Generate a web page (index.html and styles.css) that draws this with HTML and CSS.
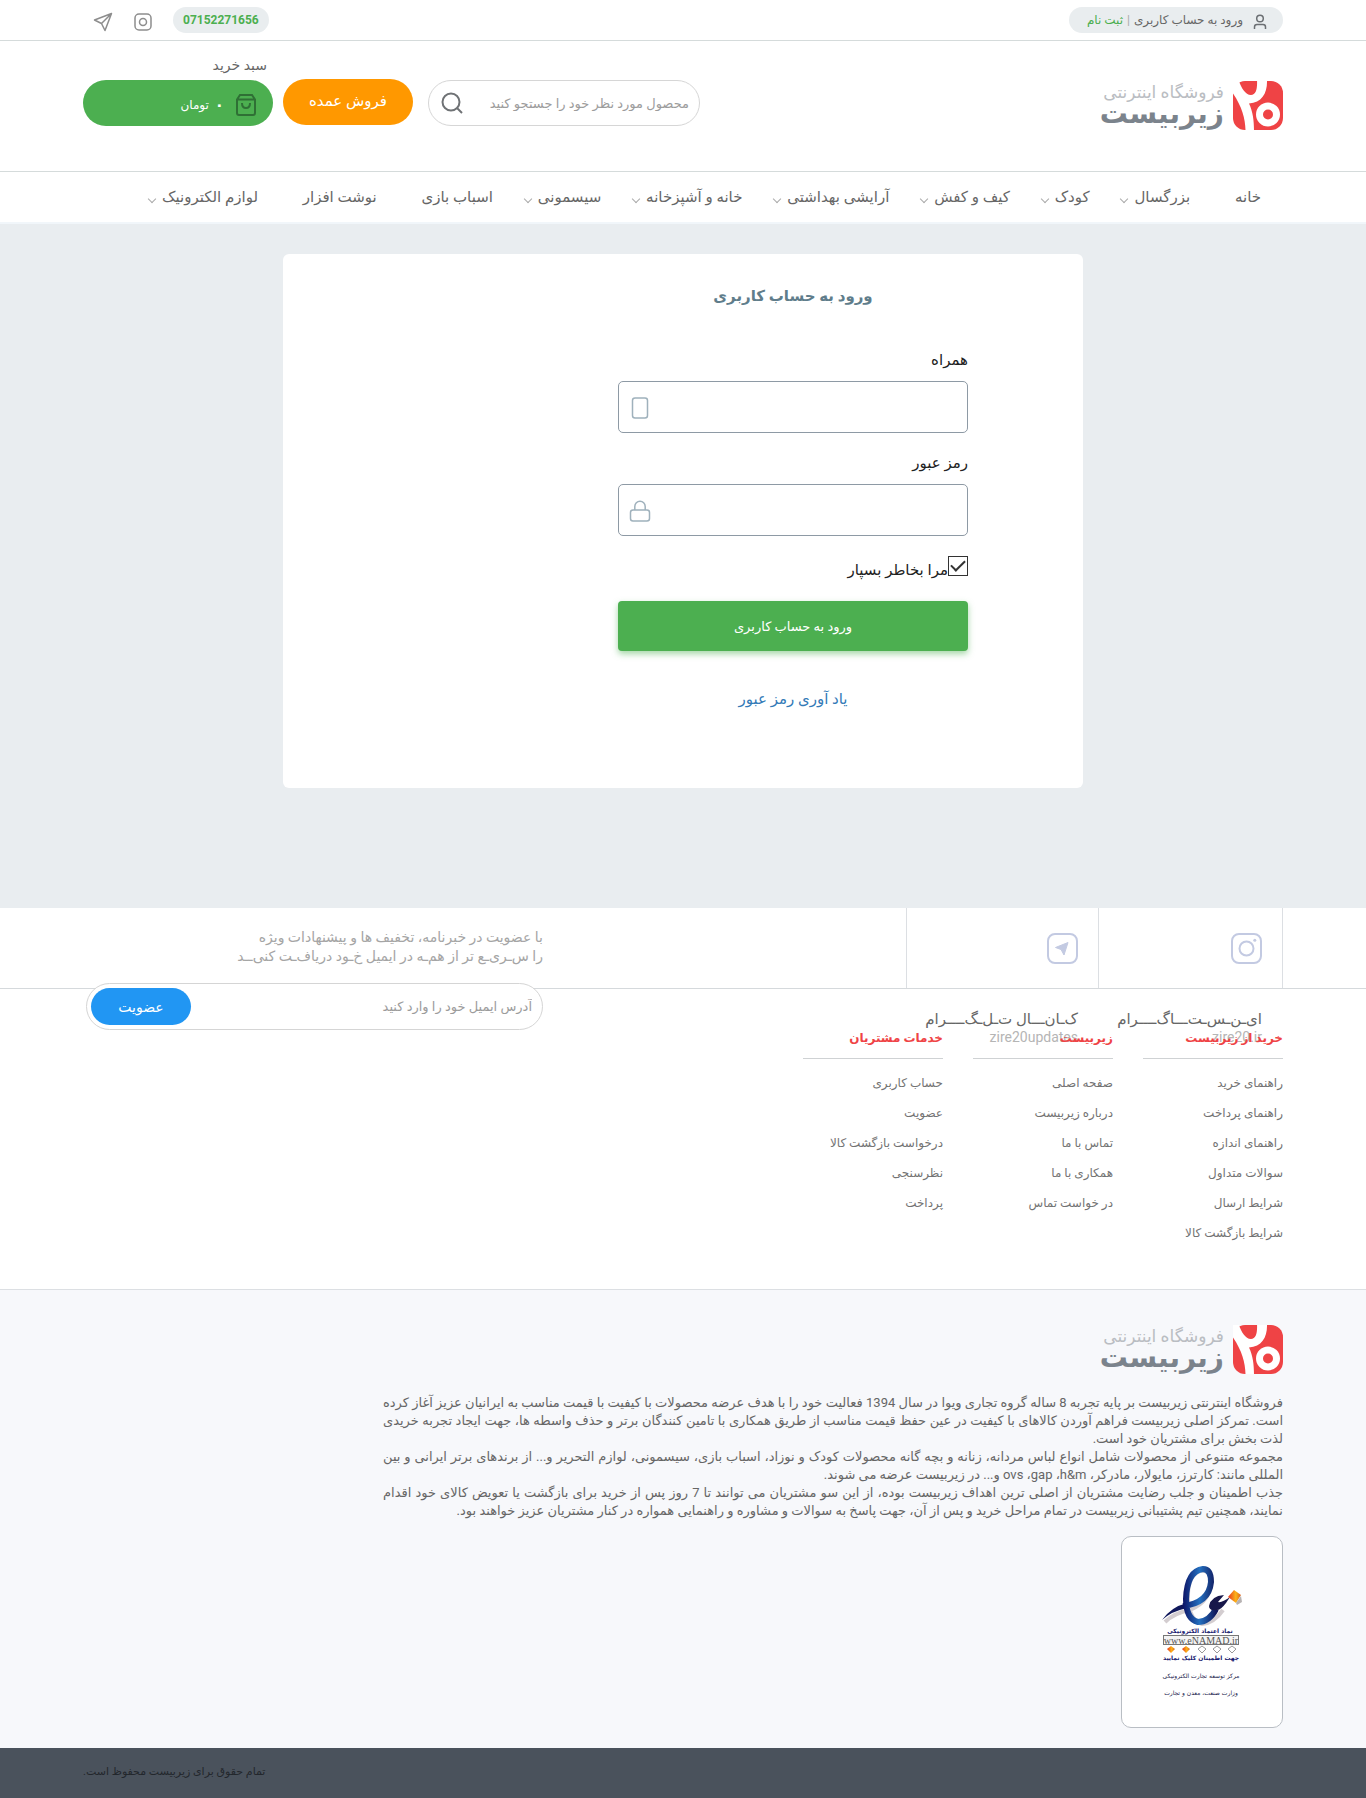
FILE: index.html
```html
<!DOCTYPE html>
<html lang="fa" dir="rtl">
<head>
<meta charset="utf-8">
<meta name="viewport" content="width=device-width, initial-scale=1">
<title>ورود به حساب کاربری</title>
<link rel="stylesheet" href="styles.css">
</head>
<body>
<svg width="0" height="0" class="sprite" aria-hidden="true">
  <symbol id="mark" viewBox="0 0 50 49">
    <rect width="50" height="49" rx="12" fill="#ef4345"/>
    <path d="M-1-1H5.500C8 6 12 14 18 14C23 14 24.500 8 24 -1H34C34.500 12 29 22 16 22.500C20 31 21 40 21 50H12.500C12.500 38 9 25 -1 11Z" class="mark-cut"/>
    <circle cx="35" cy="33.500" r="12" class="mark-cut"/>
    <circle cx="35" cy="33.500" r="5" fill="#ef4345"/>
  </symbol>
</svg>

<div class="topbar">
  <div class="container topbar-row">
    <div class="user-pill">
      <svg width="14" height="16" viewBox="0 0 14 16" fill="none" stroke="#6b6f73" stroke-width="1.500"><circle cx="7" cy="4.500" r="3.300"/><path d="M1.500 15v-2q0-2.500 2.500-2.500h6q2.500 0 2.500 2.500v2"/></svg>
      <a href="#login">ورود به حساب کاربری</a>
      <span class="sep">|</span>
      <a href="#register" class="register">ثبت نام</a>
    </div>
    <div class="top-links">
      <a href="tel:07152271656" class="phone">07152271656</a>
      <a href="#instagram" aria-label="اینستاگرام"><svg width="18" height="18" viewBox="0 0 18 18" fill="none" stroke="#8d8d8d" stroke-width="1.500"><rect x="1" y="1" width="16" height="16" rx="4"/><circle cx="9" cy="9" r="3.500"/></svg></a>
      <a href="#telegram" aria-label="تلگرام"><svg width="20" height="20" viewBox="0 0 20 20" fill="none" stroke="#8d8d8d" stroke-width="1.500" stroke-linejoin="round"><path d="M18.500 1.500 1.500 8l7 3.500L12 18.500zM18.500 1.500l-10 10"/></svg></a>
    </div>
  </div>
</div>

<header class="header">
  <div class="container header-row">
    <a href="#home" class="logo">
      <svg width="50" height="49"><use href="#mark"/></svg>
      <span class="logo-text"><span class="logo-small">فروشگاه اینترنتی</span><span class="logo-big">زیربیست</span></span>
    </a>
    <div class="tools">
      <form class="search">
        <input type="text" aria-label="جستجو" placeholder="محصول مورد نظر خود را جستجو کنید">
        <button type="button" aria-label="جستجو"><svg width="22" height="22" viewBox="0 0 22 22" fill="none" stroke="#6f7275" stroke-width="2"><circle cx="10" cy="10" r="8.500"/><path d="m16 16 5 5"/></svg></button>
      </form>
      <a href="#wholesale" class="wholesale">فروش عمده</a>
      <div class="cart">
        <span class="cart-label">سبد خرید</span>
        <a href="#cart" class="cart-button">
          <svg width="20" height="22" viewBox="0 0 20 22" fill="none" stroke="#2f7035" stroke-width="2"><path d="M1 5.500 4 1h12l3 4.500V19q0 2-2 2H3q-2 0-2-2zM1 5.500h18M6 9q0 5 4 5t4-5"/></svg>
          <b>۰</b><span>تومان</span>
        </a>
      </div>
    </div>
  </div>
</header>

<nav class="nav">
  <ul class="container nav-list">
    <li><a href="#n1">خانه</a></li>
    <li class="more"><a href="#n2">بزرگسال</a></li>
    <li class="more"><a href="#n3">کودک</a></li>
    <li class="more"><a href="#n4">کیف و کفش</a></li>
    <li class="more"><a href="#n5">آرایشی بهداشتی</a></li>
    <li class="more"><a href="#n6">خانه و آشپزخانه</a></li>
    <li class="more"><a href="#n7">سیسمونی</a></li>
    <li><a href="#n8">اسباب بازی</a></li>
    <li><a href="#n9">نوشت افزار</a></li>
    <li class="more"><a href="#n10">لوازم الکترونیک</a></li>
  </ul>
</nav>

<main class="main">
  <section class="card">
    <form class="login">
      <h1>ورود به حساب کاربری</h1>
      <label for="mobile">همراه</label>
      <div class="field">
        <input id="mobile" type="text">
        <svg width="22" height="24" viewBox="0 0 22 24" fill="none" stroke="#9fb1bc" stroke-width="1.500"><rect x="3.500" y="2" width="15" height="20" rx="2.500"/></svg>
      </div>
      <label for="password">رمز عبور</label>
      <div class="field">
        <input id="password" type="password">
        <svg width="22" height="24" viewBox="0 0 22 24" fill="none" stroke="#9fb1bc" stroke-width="1.500"><rect x="1.500" y="11" width="19" height="11" rx="2.500"/><path d="M5.800 11V7.500a5.200 5.200 0 0 1 10.400 0V11"/></svg>
      </div>
      <div class="remember">
        <input id="remember" type="checkbox" checked>
        <label for="remember">مرا بخاطر بسپار</label>
      </div>
      <button type="button" class="submit">ورود به حساب کاربری</button>
      <a href="#forgot" class="forgot">یاد آوری رمز عبور</a>
    </form>
  </section>
</main>

<footer>
  <div class="social-bar">
    <div class="container social-row">
      <div class="social insta">
        <svg width="31" height="31" viewBox="0 0 31 31" fill="none" stroke="#c3cae2" stroke-width="2"><rect x="1" y="1" width="29" height="29" rx="7"/><circle cx="15.500" cy="15.500" r="7"/><circle cx="23.800" cy="7.300" r="1.500" fill="#c3cae2" stroke="none"/></svg>
        <a href="#instagram">ای‌ـن‌ـس‌ـت‌ـــاگ‌ــــرام</a>
        <small>zire20.ir</small>
      </div>
      <div class="social tele">
        <svg width="31" height="31" viewBox="0 0 31 31" fill="none" stroke="#c3cae2" stroke-width="2"><rect x="1" y="1" width="29" height="29" rx="7"/><path d="M21 9.500 8.500 14.500l5.500 2 3 5.500z" fill="#c3cae2" stroke-width="1" stroke-linejoin="round"/></svg>
        <a href="#telegram">ک‌ـان‌ـــال ت‌ـل‌ـگ‌ــــرام</a>
        <small>zire20updates</small>
      </div>
      <form class="newsletter">
        <p>با عضویت در خبرنامه، تخفیف ها و پیشنهادات ویژه<br>را س‌ـری‌ـع تر از هم‌ـه در ایمیل خ‌ـود دریاف‌ـت کنی‌ــد</p>
        <div class="newsletter-box">
          <input type="text" aria-label="ایمیل" placeholder="آدرس ایمیل خود را وارد کنید">
          <button type="button">عضویت</button>
        </div>
      </form>
    </div>
  </div>
  <div class="container columns">
    <section>
      <h2>خرید از زیربیست</h2>
      <ul><li><a href="#a1">راهنمای خرید</a></li><li><a href="#a2">راهنمای پرداخت</a></li><li><a href="#a3">راهنمای اندازه</a></li><li><a href="#a4">سوالات متداول</a></li><li><a href="#a5">شرایط ارسال</a></li><li><a href="#a6">شرایط بازگشت کالا</a></li></ul>
    </section>
    <section>
      <h2>زیربیست</h2>
      <ul><li><a href="#b1">صفحه اصلی</a></li><li><a href="#b2">درباره زیربیست</a></li><li><a href="#b3">تماس با ما</a></li><li><a href="#b4">همکاری با ما</a></li><li><a href="#b5">در خواست تماس</a></li></ul>
    </section>
    <section>
      <h2>خدمات مشتریان</h2>
      <ul><li><a href="#c1">حساب کاربری</a></li><li><a href="#c2">عضویت</a></li><li><a href="#c3">درخواست بازگشت کالا</a></li><li><a href="#c4">نظرسنجی</a></li><li><a href="#c5">پرداخت</a></li></ul>
    </section>
  </div>
  <div class="about">
    <div class="container">
      <a href="#home" class="logo">
        <svg width="50" height="49"><use href="#mark"/></svg>
        <span class="logo-text"><span class="logo-small">فروشگاه اینترنتی</span><span class="logo-big">زیربیست</span></span>
      </a>
      <div class="about-text">
        <p>فروشگاه اینترنتی زیربیست بر پایه تجربه 8 ساله گروه تجاری ویوا در سال 1394 فعالیت خود را با هدف عرضه محصولات با کیفیت با قیمت مناسب به ایرانیان عزیز آغاز کرده است. تمرکز اصلی زیربیست فراهم آوردن کالاهای با کیفیت در عین حفظ قیمت مناسب از طریق همکاری با تامین کنندگان برتر و حذف واسطه ها، جهت ایجاد تجربه خریدی لذت بخش برای مشتریان خود است.</p>
        <p>مجموعه متنوعی از محصولات شامل انواع لباس مردانه، زنانه و بچه گانه محصولات کودک و نوزاد، اسباب بازی، سیسمونی، لوازم التحریر و... از برندهای برتر ایرانی و بین المللی مانند: کارترز، مایولار، مادرکر، ovs ،gap ،h&amp;m و... در زیربیست عرضه می شوند.</p>
        <p>جذب اطمینان و جلب رضایت مشتریان از اصلی ترین اهداف زیربیست بوده، از این سو مشتریان می توانند تا 7 روز پس از خرید برای بازگشت یا تعویض کالای خود اقدام نمایند، همچنین تیم پشتیبانی زیربیست در تمام مراحل خرید و پس از آن، جهت پاسخ به سوالات و مشاوره و راهنمایی همواره در کنار مشتریان عزیز خواهند بود.</p>
      </div>
      <a href="#enamad" class="enamad">
        <svg width="100" height="140" viewBox="0 0 100 140" text-anchor="middle">
          <defs>
            <linearGradient id="eg" x1="0" x2="1"><stop offset="0" stop-color="#0c1466"/><stop offset=".5" stop-color="#2470c0"/><stop offset="1" stop-color="#10185c"/></linearGradient>
            <linearGradient id="og" x1="0" x2="1"><stop offset="0" stop-color="#e8301c"/><stop offset=".6" stop-color="#fbb416"/><stop offset="1" stop-color="#d86020"/></linearGradient>
          </defs>
          <path d="M13 60Q22 51 38 48Q59 39 59 19Q58 7 48 9Q35 14 36 38Q38 59 50 62Q62 61 71 48" fill="none" stroke="#d3cdd0" stroke-width="4"/>
          <path d="M10 58Q19 45 35 41L35 46Q20 49 10 58Z" fill="#10185c"/>
          <path d="M31 44Q57 41 59 20Q59 7 51 7Q35 9 34 37Q34 57 46 60Q57 60 64 47" fill="none" stroke="url(#eg)" stroke-width="6"/>
          <path d="M57 44Q59 34 72 33L66 40Q70 41 78 35L74 41Q68 49 64 48Q57 49 57 44Z" fill="#17174a"/>
          <path d="m82 28 7 5-5 8-8-6z" fill="url(#og)"/>
          <path d="m89 34 1 6-5 3-1-2z" fill="#b7b2b2"/>
          <text x="48" y="71" class="en-bold">نماد اعتماد الکترونیکی</text>
          <rect x="11.500" y="73.500" width="75" height="9" fill="#f4f4f4" stroke="#777"/>
          <text x="49" y="82" class="en-url">www.eNAMAD.ir</text>
          <g fill="url(#og)"><path d="m19 84 4 3-4 4-4-4z"/><path d="m34 84 4 3-4 4-4-4z"/></g>
          <g fill="#fff" stroke="#999"><path d="m50 84 4 3-4 4-4-4z"/><path d="m65 84 4 3-4 4-4-4z"/><path d="m80 84 4 3-4 4-4-4z"/></g>
          <text x="49" y="98" class="en-bold">جهت اطمینان کلیک نمایید</text>
          <text x="49" y="116" class="en-text">مرکز توسعه تجارت الکترونیکی</text>
          <text x="49" y="133" class="en-text">وزارت صنعت، معدن و تجارت</text>
        </svg>
      </a>
    </div>
  </div>
  <div class="copyright"><div class="container"><p>تمام حقوق برای زیربیست محفوظ است.</p></div></div>
</footer>
</body>
</html>
```
FILE: styles.css
```css
* { box-sizing: border-box; }
body { margin: 0; background: #fff; color: #666; font-family: Roboto, "DejaVu Sans", sans-serif; font-size: 12px; line-height: 20px; }
a { color: inherit; text-decoration: none; }
ul { list-style: none; margin: 0; padding: 0; }
p, h1, h2 { margin: 0; }
svg { display: block; flex: none; }
input, button { font-family: inherit; }
.sprite { position: absolute; }
.container { width: 100%; max-width: 1200px; margin: 0 auto; }

.topbar { border-bottom: 1px solid #d5dbdb; }
.topbar-row { display: flex; justify-content: space-between; padding: 7px 0; }
.user-pill { display: flex; align-items: center; gap: 4px; height: 26px; width: 214px; padding: 0 16px; border-radius: 13px; background: #e9edef; white-space: nowrap; }
.user-pill svg { margin-left: 6px; margin-top: 4px; }
.sep { color: #aaa; }
.register { color: #4caf50; }
.top-links { display: flex; align-items: center; gap: 21px; padding-left: 10px; }
.top-links svg { margin-top: 3px; }
.phone { height: 26px; padding: 0 10px; border-radius: 13px; background: #e9edef; color: #4caf50; font-weight: 700; line-height: 27px; }

.header { border-bottom: 1px solid #d5dbdb; }
.header-row { display: flex; justify-content: space-between; height: 130px; }
.logo { display: flex; gap: 9px; width: max-content; }
.header .logo { margin-top: 40px; }
.mark-cut { fill: #fff; }
.logo-text { display: flex; flex-direction: column; }
.logo-small { font-size: 17px; line-height: 22px; color: #babdc2; }
.logo-big { font-size: 28px; line-height: 22px; font-weight: 700; color: #7b838c; }
.tools { display: flex; align-items: flex-start; padding-top: 38px; }
.search { display: flex; align-items: center; width: 272px; height: 46px; margin: 1px 0 0 15px; border: 1px solid #d6d6d6; border-radius: 23px; padding: 0 10px 0 12px; }
.search input { flex: 1; min-width: 0; border: 0; padding: 0; font-size: 13px; background: none; outline: 0; }
.search button { border: 0; padding: 0; background: none; }
input::placeholder { color: #9c9c9c; opacity: 1; }
.wholesale { width: 130px; height: 46px; margin-left: 10px; border-radius: 23px; background: #ff9800; color: #fff; font-size: 15px; line-height: 44px; text-align: center; }
.cart { width: 190px; margin-top: -24px; }
.cart-label { display: block; height: 25px; padding-right: 6px; font-size: 14px; line-height: 20px; }
.cart-button { display: flex; align-items: center; gap: 6px; height: 46px; padding: 4px 17px 0 0; border-radius: 23px; background: #4caf50; color: #fff; }
.cart-button svg { margin-left: 6px; }
.cart-button b { font-size: 15px; }

.nav { height: 52px; border-bottom: 2px solid #f1f6fa; }
.nav-list { display: flex; justify-content: space-between; padding: 0 22px 0 79px; }
.nav-list li { position: relative; font-size: 15px; line-height: 50px; }
.more::after { content: ""; position: absolute; left: -13px; top: 24px; width: 5px; height: 5px; border: solid #aaa; border-width: 0 1px 1px 0; transform: rotate(45deg); }

.main { background: #e9edf0; padding: 30px 20px 120px; }
.card { max-width: 800px; min-height: 534px; margin: 0 auto; padding: 27px 115px 60px; border-radius: 6px; background: #fff; }
.login { display: flex; flex-direction: column; max-width: 350px; color: #222; font-size: 15px; }
.login h1 { margin-bottom: 39px; color: #607d8b; font-size: 15px; font-weight: 700; line-height: 30px; text-align: center; }
.login label { line-height: 21px; }
.login > label { padding-bottom: 10px; }
.field { position: relative; margin-bottom: 20px; }
.field input { display: block; width: 100%; height: 52px; border: 1px solid #8e9aa5; border-radius: 5px; background: #fff; padding: 0 12px 0 44px; font-size: 15px; }
.field svg { position: absolute; left: 11px; top: 15px; }
.remember { display: flex; margin-bottom: 20px; }
.remember label { padding-top: 4px; }
.remember input { appearance: none; width: 20px; height: 20px; margin: 0; border: 1px solid #333; display: grid; place-items: start center; }
.remember input:checked::after { content: ""; width: 6px; height: 12px; border: solid #333; border-width: 0 2px 2px 0; transform: rotate(45deg); }
.submit { height: 50px; border: 0; border-radius: 4px; background: #4caf50; color: #fff; font-size: 13px; box-shadow: 0 3px 6px rgba(76,175,80,.5); }
.forgot { margin-top: 38px; color: #337ab7; text-align: center; }

.social-bar { height: 81px; border-bottom: 1px solid #d5d9dc; }
.social-row { display: flex; height: 80px; }
.social { display: flex; flex-direction: column; border-left: 1px solid #dcdfe3; padding: 25px 20px 0; white-space: nowrap; font-size: 15px; line-height: 18px; }
.social svg { margin-bottom: 46px; }
.social small { direction: ltr; text-align: right; color: #b5b5b5; font-size: 14px; line-height: 18px; }
.insta { width: 185px; border-right: 1px solid #dcdfe3; }
.tele { width: 192px; }
.newsletter { width: 460px; margin-right: auto; padding: 20px 0 0 3px; color: #a5a5a5; }
.newsletter p { font-size: 14px; line-height: 19px; }
.newsletter-box { position: relative; display: flex; align-items: center; height: 47px; margin-top: 17px; border: 1px solid #d5d5d5; border-radius: 24px; background: #fff; padding: 0 10px 0 4px; }
.newsletter-box input { flex: 1; min-width: 0; border: 0; padding: 0; outline: 0; background: none; font-size: 13px; }
.newsletter-box button { width: 100px; height: 37px; border: 0; border-radius: 19px; background: #2196f3; color: #fff; font-size: 14px; }

.columns { display: flex; gap: 30px; min-height: 300px; padding-top: 39px; }
.columns section { width: 140px; position: relative; }
.columns h2 { height: 31px; margin-bottom: 9px; border-bottom: 1px solid #cfd2d4; color: #ef4345; font-size: 12px; font-weight: 700; line-height: 20px; }
.columns li { line-height: 30px; color: #737373; }

.about { border-top: 1px solid #dcdfe3; background: #f7f8fb; padding: 35px 0 20px; }
.about .mark-cut { fill: #f7f8fb; }
.about-text { max-width: 900px; margin: 20px 0 16px; font-size: 13px; line-height: 18px; text-align: justify; }
.enamad { display: grid; place-items: center; width: 162px; height: 192px; border: 1px solid #b9bec4; border-radius: 10px; background: #fff; }
.en-bold { font: 700 6px "DejaVu Sans", sans-serif; fill: #17176e; }
.en-url { font: 10px "Liberation Serif", serif; fill: #555; }
.en-text { font: 6px "DejaVu Sans", sans-serif; fill: #17174a; }

.copyright { background: #4a525c; height: 50px; color: #23272c; font-size: 11px; line-height: 48px; text-align: left; }
```
